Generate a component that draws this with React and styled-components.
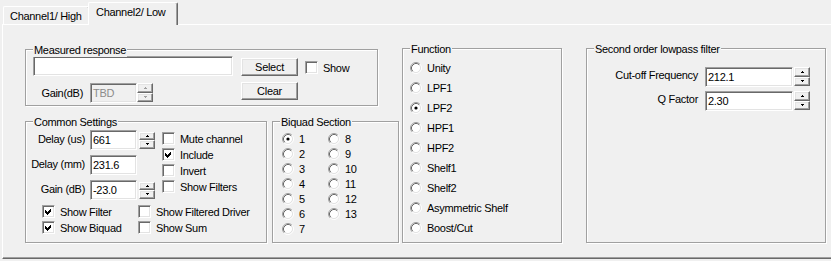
import React from "react";
import styled, { createGlobalStyle, css } from "styled-components";

const GlobalStyle = createGlobalStyle`
  html, body { margin: 0; padding: 0; background: #f0f0f0; }
  body {
    font-family: "Liberation Sans", Arial, sans-serif;
    font-size: 11px;
    letter-spacing: -0.3px;
    color: #000;
  }
  * { box-sizing: border-box; }
`;

const raised = css`
  border: 1px solid;
  border-color: #fff #696969 #696969 #fff;
  box-shadow: inset -1px -1px #a0a0a0, inset 1px 1px #e3e3e3;
  background: #f0f0f0;
`;

const sunken = css`
  border: 1px solid;
  border-color: #a0a0a0 #fff #fff #a0a0a0;
  box-shadow: inset 1px 1px #696969, inset -1px -1px #e3e3e3;
`;

const Window = styled.div`
  width: 831px;
  height: 261px;
  overflow: hidden;
  background: #f0f0f0;
`;

const TabBar = styled.div`
  display: flex;
  align-items: flex-end;
  height: 24px;
  padding-left: 3px;
  position: relative;
  z-index: 1;
`;

const Tab = styled.div`
  position: relative;
  width: ${(p) => p.$w}px;
  height: ${(p) => (p.$active ? 23 : 18)}px;
  margin-bottom: ${(p) => (p.$active ? -1 : 0)}px;
  margin-left: ${(p) => (p.$active ? -2 : 0)}px;
  padding: ${(p) => (p.$active ? "3px 0 0 7px" : "3px 0 0 6px")};
  line-height: 13px;
  white-space: nowrap;
  background: #f0f0f0;
  border-left: 1px solid #fff;
  border-top: 1px solid #fff;
  border-right: 1px solid #696969;
  border-top-left-radius: 2px;
  border-top-right-radius: 2px;
  box-shadow: inset -1px 0 #a0a0a0;
  z-index: ${(p) => (p.$active ? 2 : 1)};
`;

const Panel = styled.div`
  margin-left: 2px;
  width: 840px;
  height: 235px;
  border-top: 1px solid #fff;
  border-left: 1px solid #fff;
  border-bottom: 1px solid #696969;
  box-shadow: inset 0 -1px #a0a0a0;
  display: flex;
  align-items: flex-start;
  padding: 23px 0 0 22px;
`;

const LeftColumn = styled.div`
  display: flex;
  flex-direction: column;
  width: 374px;
  margin-right: 3px;
`;

const LowerRow = styled.div`
  display: flex;
  gap: 5px;
  margin-top: 15px;
`;

const Group = styled.div`
  position: relative;
  flex: none;
  width: ${(p) => p.$w}px;
  height: ${(p) => p.$h}px;
  margin-top: ${(p) => p.$mt || 0}px;
  margin-left: ${(p) => p.$ml || 0}px;
  border: 1px solid #a0a0a0;
  box-shadow: inset 1px 1px #fff, 1px 1px #fff;
`;

const Legend = styled.span`
  position: absolute;
  top: -6px;
  left: 7px;
  padding: 0 1px;
  line-height: 13px;
  background: #f0f0f0;
  white-space: nowrap;
`;

const TextField = styled.div`
  ${sunken};
  width: ${(p) => p.$w}px;
  height: 20px;
  padding-left: 2px;
  line-height: 18px;
  background: ${(p) => (p.$disabled ? "#f0f0f0" : "#fff")};
  color: ${(p) => (p.$disabled ? "#8c8c8c" : "#000")};
  white-space: nowrap;
  flex: none;
`;

const PushButton = styled.div`
  ${raised};
  width: 57px;
  height: 18px;
  line-height: 16px;
  text-align: center;
  flex: none;
`;

const SelectButton = styled(PushButton)`
  margin: 2px 0 0 8px;
`;

const ClearButton = styled(PushButton)`
  margin-left: 88px;
`;

const SpinBox = styled.div`
  display: flex;
  flex-direction: column;
  width: 16px;
  height: ${(p) => p.$h}px;
  margin-left: ${(p) => p.$ml || 0}px;
  flex: none;
`;

const SpinHalf = styled.div`
  ${raised};
  flex: 1;
  display: flex;
  align-items: center;
  justify-content: center;
`;

const Arrow = ({ down, disabled }) => (
  <svg width="3" height="2" viewBox="0 0 3 2" shapeRendering="crispEdges">
    {down ? (
      <>
        <rect x="0" y="0" width="3" height="1" fill={disabled ? "#a0a0a0" : "#000"} />
        <rect x="1" y="1" width="1" height="1" fill={disabled ? "#a0a0a0" : "#000"} />
      </>
    ) : (
      <>
        <rect x="1" y="0" width="1" height="1" fill={disabled ? "#a0a0a0" : "#000"} />
        <rect x="0" y="1" width="3" height="1" fill={disabled ? "#a0a0a0" : "#000"} />
      </>
    )}
  </svg>
);

const Spin = ({ h, ml, disabled }) => (
  <SpinBox $h={h} $ml={ml}>
    <SpinHalf>
      <Arrow disabled={disabled} />
    </SpinHalf>
    <SpinHalf>
      <Arrow down disabled={disabled} />
    </SpinHalf>
  </SpinBox>
);

const CheckItem = styled.div`
  display: flex;
  align-items: flex-start;
  height: 16px;
  line-height: 16px;
  white-space: nowrap;
`;

const CheckBoxBox = styled.span`
  ${sunken};
  width: 13px;
  height: 13px;
  margin: 1px 5px 0 0;
  padding: 1px;
  background: #fff;
  display: flex;
  flex: none;
`;

const Check = ({ checked, children }) => (
  <CheckItem>
    <CheckBoxBox>
      {checked && (
        <svg width="9" height="9" viewBox="0 0 9 9" shapeRendering="crispEdges">
          <path d="M1 3 L3 5 L7 1 L7 4 L3 8 L1 6 Z" fill="#000" />
        </svg>
      )}
    </CheckBoxBox>
    {children}
  </CheckItem>
);

const ShowCheckWrap = styled.div`
  margin: 4px 0 0 7px;
`;

const RadioItem = styled.div`
  display: flex;
  align-items: center;
  height: ${(p) => p.$h}px;
  white-space: nowrap;
`;

const RadioIcon = styled.svg`
  flex: none;
  margin-right: 5px;
`;

const Radio = ({ checked, h, children }) => (
  <RadioItem $h={h}>
    <RadioIcon width="12" height="12" viewBox="0 0 12 12">
      <circle cx="6" cy="6" r="4.2" fill="#fff" />
      <path d="M2.11 9.89 A5.5 5.5 0 0 1 9.89 2.11" fill="none" stroke="#a0a0a0" strokeWidth="1" />
      <path d="M9.89 2.11 A5.5 5.5 0 0 1 2.11 9.89" fill="none" stroke="#ffffff" strokeWidth="1" />
      <path d="M2.82 9.18 A4.5 4.5 0 0 1 9.18 2.82" fill="none" stroke="#696969" strokeWidth="1" />
      <path d="M9.18 2.82 A4.5 4.5 0 0 1 2.82 9.18" fill="none" stroke="#e3e3e3" strokeWidth="1" />
      {checked && <circle cx="6" cy="6" r="1.6" fill="#000" />}
    </RadioIcon>
    {children}
  </RadioItem>
);

/* Measured response */
const MeasuredTop = styled.div`
  display: flex;
  align-items: flex-start;
  margin: 6px 0 0 7px;
`;

const MeasuredBottom = styled.div`
  display: flex;
  align-items: flex-start;
  margin-top: 6px;
`;

const GainLabel = styled.div`
  width: 57px;
  margin: 1px 7px 0 0;
  line-height: 20px;
  text-align: right;
  white-space: nowrap;
`;

const TbdGroup = styled.div`
  display: flex;
  margin-top: 1px;
`;

/* Common settings */
const CommonTop = styled.div`
  display: flex;
  padding-top: 8px;
`;

const Fields = styled.div`
  display: flex;
  flex-direction: column;
  gap: 5px;
`;

const FieldRow = styled.div`
  display: flex;
  align-items: center;
  height: 20px;
`;

const FieldLabel = styled.div`
  width: ${(p) => p.$w}px;
  margin-right: ${(p) => p.$gap}px;
  text-align: right;
  white-space: nowrap;
  line-height: 13px;
  margin-top: -2px;
`;

const CheckColumn = styled.div`
  display: flex;
  flex-direction: column;
  margin-left: 7px;
  padding-top: 1px;
`;

const CheckGrid = styled.div`
  display: grid;
  grid-template-columns: 96px auto;
  margin-top: 4px;
  padding-left: 16px;
`;

/* Biquad */
const BiquadGrid = styled.div`
  display: grid;
  grid-template-columns: 46px auto;
  grid-template-rows: repeat(7, 15px);
  grid-auto-flow: column;
  padding: 9px 0 0 9px;
`;

/* Function */
const FunctionList = styled.div`
  display: flex;
  flex-direction: column;
  padding: 9px 0 0 7px;
`;

/* Second order */
const FilterFields = styled.div`
  display: flex;
  flex-direction: column;
  gap: 4px;
  padding-top: 18px;
`;

const FilterRow = styled.div`
  display: flex;
  align-items: flex-start;
`;

const FilterLabel = styled.div`
  width: 111px;
  margin-right: 7px;
  text-align: right;
  white-space: nowrap;
  line-height: 16px;
`;

const functions = [
  "Unity",
  "LPF1",
  "LPF2",
  "HPF1",
  "HPF2",
  "Shelf1",
  "Shelf2",
  "Asymmetric Shelf",
  "Boost/Cut",
];

export default function App() {
  return (
    <>
      <GlobalStyle />
      <Window>
        <TabBar>
          <Tab $w={87}>Channel1/ High</Tab>
          <Tab $active $w={90}>
            Channel2/ Low
          </Tab>
        </TabBar>
        <Panel>
          <LeftColumn>
            <Group $w={353} $h={57} $mt={1}>
              <Legend>Measured response</Legend>
              <MeasuredTop>
                <TextField $w={200} />
                <SelectButton>Select</SelectButton>
                <ShowCheckWrap>
                  <Check>Show</Check>
                </ShowCheckWrap>
              </MeasuredTop>
              <MeasuredBottom>
                <GainLabel>Gain(dB)</GainLabel>
                <TbdGroup>
                  <TextField $w={47} $disabled>
                    TBD
                  </TextField>
                  <Spin h={19} disabled />
                </TbdGroup>
                <ClearButton>Clear</ClearButton>
              </MeasuredBottom>
            </Group>
            <LowerRow>
              <Group $w={242} $h={122}>
                <Legend>Common Settings</Legend>
                <CommonTop>
                  <Fields>
                    <FieldRow>
                      <FieldLabel $w={59} $gap={5}>Delay (us)</FieldLabel>
                      <TextField $w={47}>661</TextField>
                      <Spin h={17} ml={2} />
                    </FieldRow>
                    <FieldRow>
                      <FieldLabel $w={59} $gap={5}>Delay (mm)</FieldLabel>
                      <TextField $w={47}>231.6</TextField>
                    </FieldRow>
                    <FieldRow>
                      <FieldLabel $w={59} $gap={5}>Gain (dB)</FieldLabel>
                      <TextField $w={47}>-23.0</TextField>
                      <Spin h={17} ml={2} />
                    </FieldRow>
                  </Fields>
                  <CheckColumn>
                    <Check>Mute channel</Check>
                    <Check checked>Include</Check>
                    <Check>Invert</Check>
                    <Check>Show Filters</Check>
                  </CheckColumn>
                </CommonTop>
                <CheckGrid>
                  <Check checked>Show Filter</Check>
                  <Check>Show Filtered Driver</Check>
                  <Check checked>Show Biquad</Check>
                  <Check>Show Sum</Check>
                </CheckGrid>
              </Group>
              <Group $w={127} $h={122}>
                <Legend>Biquad Section</Legend>
                <BiquadGrid>
                  {Array.from({ length: 13 }, (_, i) => (
                    <Radio key={i} h={15} checked={i === 0}>
                      {i + 1}
                    </Radio>
                  ))}
                </BiquadGrid>
              </Group>
            </LowerRow>
          </LeftColumn>
          <Group $w={160} $h={195}>
            <Legend>Function</Legend>
            <FunctionList>
              {functions.map((f) => (
                <Radio key={f} h={20} checked={f === "LPF2"}>
                  {f}
                </Radio>
              ))}
            </FunctionList>
          </Group>
          <Group $w={240} $h={195} $ml={24}>
            <Legend>Second order lowpass filter</Legend>
            <FilterFields>
              <FilterRow>
                <FilterLabel>Cut-off Frequency</FilterLabel>
                <TextField $w={88}>212.1</TextField>
                <Spin h={19} ml={1} />
              </FilterRow>
              <FilterRow>
                <FilterLabel>Q Factor</FilterLabel>
                <TextField $w={88}>2.30</TextField>
                <Spin h={19} ml={1} />
              </FilterRow>
            </FilterFields>
          </Group>
        </Panel>
      </Window>
    </>
  );
}
